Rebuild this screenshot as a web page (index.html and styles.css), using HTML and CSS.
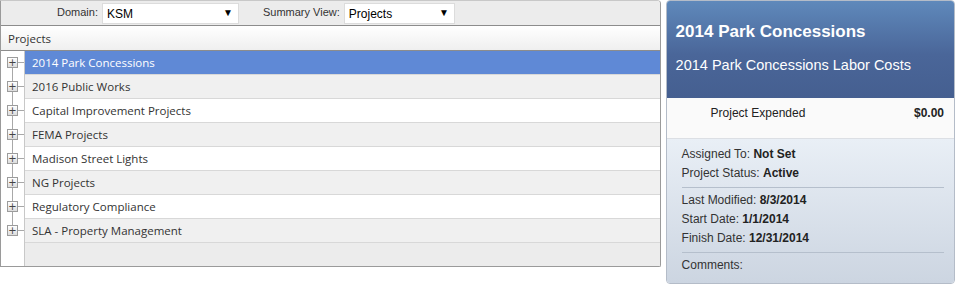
FILE: index.html
```html
<!DOCTYPE html>
<html lang="en">
<head>
    <meta charset="UTF-8">
    <title>Projects Summary</title>
    <link rel="stylesheet" href="styles.css">
</head>
<body>
    <div class="page">
        <div class="tree-panel">
            <div class="toolbar">
                <span class="field-label domain-label">Domain:</span>
                <div class="select domain-select">
                    <span>KSM</span>
                    <span class="arrow">&#9660;</span>
                </div>
                <span class="field-label summary-label">Summary View:</span>
                <div class="select summary-select">
                    <span>Projects</span>
                    <span class="arrow">&#9660;</span>
                </div>
            </div>
            <div class="grid-header">Projects</div>
            <div class="grid-body">
                <div class="row selected first">
                    <div class="expander"><span class="plus-box">+</span></div>
                    <div class="cell">2014 Park Concessions</div>
                </div>
                <div class="row alt">
                    <div class="expander"><span class="plus-box">+</span></div>
                    <div class="cell">2016 Public Works</div>
                </div>
                <div class="row">
                    <div class="expander"><span class="plus-box">+</span></div>
                    <div class="cell">Capital Improvement Projects</div>
                </div>
                <div class="row alt">
                    <div class="expander"><span class="plus-box">+</span></div>
                    <div class="cell">FEMA Projects</div>
                </div>
                <div class="row">
                    <div class="expander"><span class="plus-box">+</span></div>
                    <div class="cell">Madison Street Lights</div>
                </div>
                <div class="row alt">
                    <div class="expander"><span class="plus-box">+</span></div>
                    <div class="cell">NG Projects</div>
                </div>
                <div class="row">
                    <div class="expander"><span class="plus-box">+</span></div>
                    <div class="cell">Regulatory Compliance</div>
                </div>
                <div class="row alt last">
                    <div class="expander"><span class="plus-box">+</span></div>
                    <div class="cell">SLA - Property Management</div>
                </div>
                <div class="row filler">
                    <div class="expander blank"></div>
                    <div class="cell"></div>
                </div>
            </div>
        </div>

        <div class="detail-panel">
            <div class="detail-header">
                <div class="detail-title">2014 Park Concessions</div>
                <div class="detail-subtitle">2014 Park Concessions Labor Costs</div>
            </div>
            <div class="detail-expended">
                <span>Project Expended</span>
                <span class="amount">$0.00</span>
            </div>
            <div class="detail-info">
                <div class="info-group">
                    <div class="info-line">Assigned To: <b>Not Set</b></div>
                    <div class="info-line">Project Status: <b>Active</b></div>
                </div>
                <div class="info-group">
                    <div class="info-line">Last Modified: <b>8/3/2014</b></div>
                    <div class="info-line">Start Date: <b>1/1/2014</b></div>
                    <div class="info-line">Finish Date: <b>12/31/2014</b></div>
                </div>
                <div class="info-group">
                    <div class="info-line">Comments:</div>
                </div>
            </div>
        </div>
    </div>
</body>
</html>
```

FILE: styles.css
```css
* {
    margin: 0;
    padding: 0;
    box-sizing: border-box;
}

body {
    background-color: #ffffff;
    font-family: 'Liberation Sans', Arial, sans-serif;
    overflow: hidden;
}

.page {
    display: flex;
    align-items: flex-start;
    gap: 5px;
}

/* Left tree grid */
.tree-panel {
    width: 662px;
    height: 267px;
    border: 1px solid #9a9a9a;
    border-top-color: #c8c8c8;
    border-radius: 0 4px 2px 0;
    display: flex;
    flex-direction: column;
    overflow: hidden;
}

.toolbar {
    height: 25px;
    background-color: #ececec;
    border-bottom: 1px solid #8c8c8c;
    display: flex;
    align-items: center;
    font-size: 11px;
    color: #333;
}

.field-label {
    white-space: nowrap;
    margin-top: -3px;
}

.domain-label {
    margin-left: 56px;
    margin-right: 4px;
}

.summary-label {
    margin-left: 24px;
    margin-right: 4px;
}

.select {
    height: 21px;
    background-color: #fff;
    border: 1px solid #dcdcdc;
    display: flex;
    align-items: center;
    justify-content: space-between;
    padding: 1px 5px 0 4px;
    color: #000;
    font-size: 12px;
}

.domain-select {
    width: 137px;
}

.summary-select {
    width: 111px;
}

.arrow {
    font-size: 10px;
    margin-top: -2px;
}

.grid-header {
    height: 25px;
    background: linear-gradient(to bottom, #ffffff, #efefef);
    border-bottom: 1px solid #8c8c8c;
    display: flex;
    align-items: center;
    padding-left: 7px;
    font-family: 'Open Sans', 'Noto Sans', sans-serif;
    font-size: 11.5px;
    color: #333;
}

.grid-body {
    flex: 1;
    display: flex;
    flex-direction: column;
    font-family: 'Open Sans', 'Noto Sans', sans-serif;
    font-size: 11.5px;
    color: #333;
}

.row {
    height: 24px;
    display: flex;
}

.expander {
    width: 24px;
    flex-shrink: 0;
    background-color: #fff;
    border-right: 1px solid #c8c8c8;
    position: relative;
    display: flex;
    align-items: center;
}

/* tree connector lines */
.expander::before {
    content: '';
    position: absolute;
    left: 11px;
    top: 0;
    bottom: 0;
    width: 1px;
    background-color: #a8a8a8;
}

.first .expander::before {
    top: 12px;
}

.last .expander::before {
    bottom: 12px;
}

.expander::after {
    content: '';
    position: absolute;
    left: 16px;
    right: 0;
    top: 11px;
    height: 1px;
    background-color: #a8a8a8;
}

.expander.blank::before,
.expander.blank::after {
    display: none;
}

.plus-box {
    position: relative;
    z-index: 1;
    margin-left: 6px;
    width: 11px;
    height: 11px;
    border: 1px solid #9c9c9c;
    background: linear-gradient(to bottom, #ffffff, #dcdcdc);
    display: flex;
    align-items: center;
    justify-content: center;
    font-family: 'DejaVu Sans', sans-serif;
    font-size: 10px;
    line-height: 1;
    color: #444;
    margin-top: -1px;
}

.cell {
    flex: 1;
    display: flex;
    align-items: center;
    padding-left: 7px;
    background-color: #fff;
    border-bottom: 1px solid #d8d8d8;
}

.row.alt .cell {
    background-color: #f0f0f0;
}

.row.selected .cell {
    background-color: #5f89d6;
    color: #fff;
}

.row.filler {
    flex: 1;
}

.row.filler .cell {
    background-color: #ececec;
    border-bottom: none;
}

/* Right detail card */
.detail-panel {
    width: 290px;
    height: 284px;
    border: 1px solid #b4bcc8;
    border-radius: 4px;
    overflow: hidden;
    display: flex;
    flex-direction: column;
    color: #333;
}

.detail-header {
    height: 97px;
    background: linear-gradient(to bottom, #5f89bb, #4a6699 55%, #455f90);
    color: #fff;
    padding: 21px 9px 0;
}

.detail-title {
    font-size: 17px;
    font-weight: bold;
    line-height: 20px;
}

.detail-subtitle {
    font-size: 14.5px;
    line-height: 17px;
    margin-top: 15px;
}

.detail-expended {
    height: 41px;
    background-color: #fafafa;
    border-bottom: 1px solid #dcdfe4;
    display: flex;
    align-items: flex-start;
    justify-content: space-between;
    padding: 8px 10px 0 44px;
    font-size: 12px;
    line-height: 14px;
    color: #222;
}

.amount {
    font-weight: bold;
}

.detail-info {
    flex: 1;
    background: linear-gradient(to bottom, #e9eff6, #ccd5e1);
    padding: 3px 10px 0 15px;
    font-size: 12px;
}

.info-group {
    padding: 3px 0 4px;
    border-bottom: 1px solid #b5bfcc;
}

.info-group:last-child {
    border-bottom: none;
}

.info-line {
    line-height: 19px;
}

.info-line b {
    color: #222;
}
```
